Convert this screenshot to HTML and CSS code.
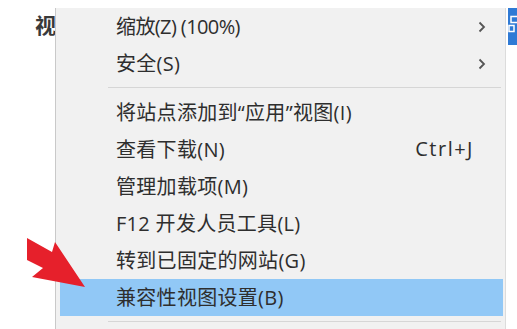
FILE: index.html
```html
<!DOCTYPE html>
<html lang="zh-CN">

<head>
    <meta charset="UTF-8">
    <meta name="viewport" content="width=device-width, initial-scale=1.0">
    <title>工具菜单</title>
    <link rel="stylesheet" href="styles.css">
</head>

<body>
    <div class="screen">
        <!-- Menu bar item behind the dropdown -->
        <div class="side">
            <span class="bar-label">视</span>
        </div>

        <!-- Dropdown -->
        <div class="menu">
            <div class="item">
                <span class="label tight">缩放(Z) (100%)</span>
                <svg class="sub" width="8" height="12" viewBox="0 0 8 12"><path d="M1.5 1.5 L6 6 L1.5 10.5" fill="none" stroke="#555" stroke-width="1.8"/></svg>
            </div>
            <div class="item">
                <span class="label">安全(S)</span>
                <svg class="sub" width="8" height="12" viewBox="0 0 8 12"><path d="M1.5 1.5 L6 6 L1.5 10.5" fill="none" stroke="#555" stroke-width="1.8"/></svg>
            </div>
            <div class="separator"></div>
            <div class="item"><span class="label">将站点添加到“应用”视图(I)</span></div>
            <div class="item">
                <span class="label">查看下载(N)</span>
                <span class="key">Ctrl+J</span>
            </div>
            <div class="item"><span class="label">管理加载项(M)</span></div>
            <div class="item"><span class="label">F12 开发人员工具(L)</span></div>
            <div class="item"><span class="label">转到已固定的网站(G)</span></div>
            <div class="item selected"><span class="label">兼容性视图设置(B)</span></div>
            <div class="separator"></div>
        </div>

        <div class="strip">
            <div class="tab-btn">
                <svg width="9" height="37" viewBox="0 0 9 37">
                    <rect x="3" y="8.5" width="8" height="6" fill="none" stroke="#fff" stroke-width="1.5"/>
                    <rect x="1" y="17.5" width="5" height="6" fill="none" stroke="#fff" stroke-width="1.5"/>
                </svg>
            </div>
        </div>
    </div>

    <!-- Red pointer arrow drawn over the menu -->
    <svg class="pointer" width="65" height="58" viewBox="0 0 65 58">
        <polygon points="2,3 27,17 30,7 60,52 7,42 18,33 2,25" fill="#e6202b"/>
    </svg>
</body>

</html>
```

FILE: styles.css
```css
body {
    margin: 0;
    padding: 0;
    width: 517px;
    height: 329px;
    overflow: hidden;
    background: #fff;
    font-family: 'Open Sans', 'Noto Sans CJK SC', sans-serif;
    color: #2e2e2e;
    position: relative;
}

.screen {
    display: flex;
    padding-top: 8px;
    height: 321px;
    overflow: hidden;
}

.side {
    width: 55px;
    overflow: hidden;
    display: flex;
    justify-content: flex-end;
}

.bar-label {
    font-family: 'Noto Sans CJK SC', sans-serif;
    font-weight: bold;
    font-size: 21px;
    line-height: 1;
    color: #3a3a3a;
    margin-top: 6px;
    margin-right: -1px;
}

.menu {
    width: 443px;
    background: #f1f1f1;
    border-left: 1px solid #c9c9c9;
    border-right: 1px solid #dcdcdc;
    padding: 0 2px 0 4px;
}

.item {
    height: 37px;
    display: flex;
    align-items: center;
    padding: 0 17px 0 56px;
    font-size: 20px;
    letter-spacing: 0.3px;
}

.item .label {
    flex: 1;
    white-space: nowrap;
    margin-top: -2px;
}

.item .label.tight {
    letter-spacing: -0.6px;
}

.item.selected {
    background: #91c8f6;
}

.key {
    margin-right: 12px;
    letter-spacing: 1.5px;
    margin-top: -2px;
}

.sub {
    display: block;
    margin-top: 0;
}

.separator {
    height: 1px;
    background: #d6d6d6;
    margin: 5px 2px 6px 48px;
}

.strip {
    flex: 1;
    padding-left: 2px;
}

.tab-btn {
    height: 37px;
    background: #2f7ad5;
    overflow: hidden;
}

.tab-btn svg {
    display: block;
}

.pointer {
    position: absolute;
    left: 25px;
    top: 235px;
}
```
